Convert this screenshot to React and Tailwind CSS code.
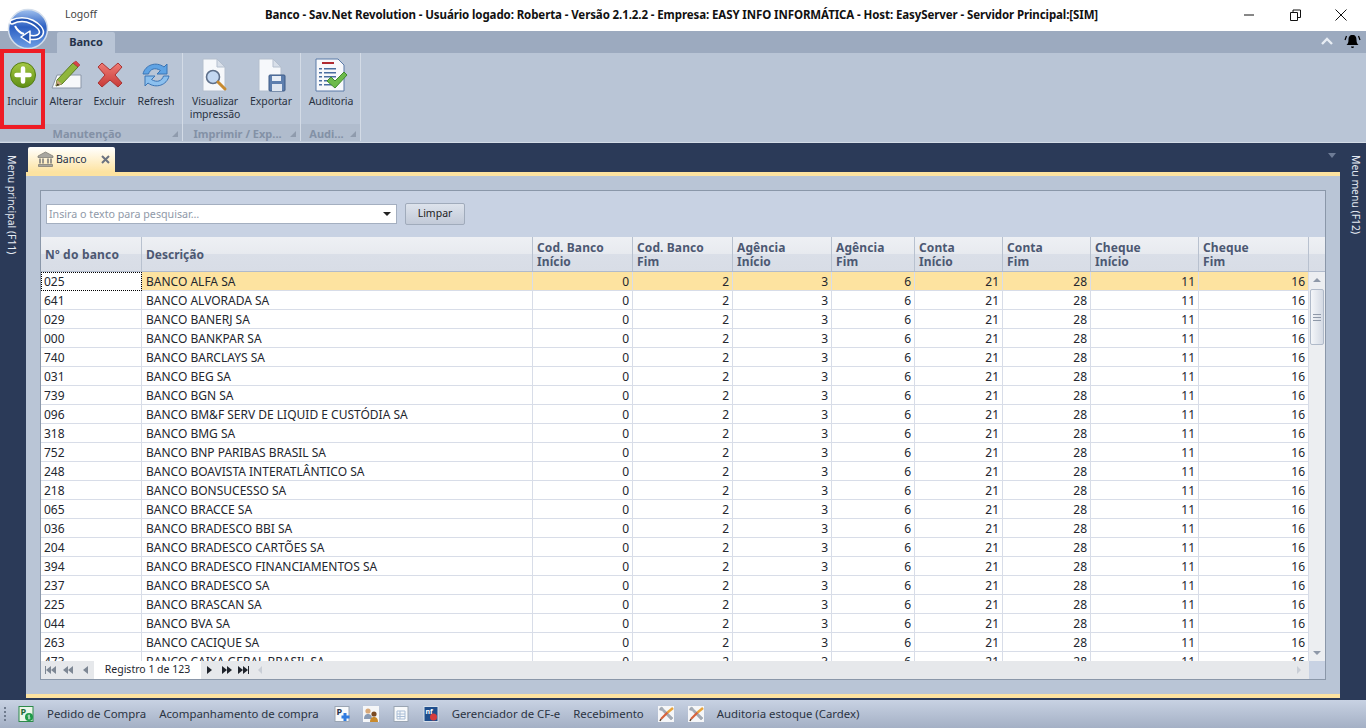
import React from 'react'

const banks = [
  ['025', 'BANCO ALFA SA'],
  ['641', 'BANCO ALVORADA SA'],
  ['029', 'BANCO BANERJ SA'],
  ['000', 'BANCO BANKPAR SA'],
  ['740', 'BANCO BARCLAYS SA'],
  ['031', 'BANCO BEG SA'],
  ['739', 'BANCO BGN SA'],
  ['096', 'BANCO BM&F SERV DE LIQUID E CUSTÓDIA SA'],
  ['318', 'BANCO BMG SA'],
  ['752', 'BANCO BNP PARIBAS BRASIL SA'],
  ['248', 'BANCO BOAVISTA INTERATLÂNTICO SA'],
  ['218', 'BANCO BONSUCESSO SA'],
  ['065', 'BANCO BRACCE SA'],
  ['036', 'BANCO BRADESCO BBI SA'],
  ['204', 'BANCO BRADESCO CARTÕES SA'],
  ['394', 'BANCO BRADESCO FINANCIAMENTOS SA'],
  ['237', 'BANCO BRADESCO SA'],
  ['225', 'BANCO BRASCAN SA'],
  ['044', 'BANCO BVA SA'],
  ['263', 'BANCO CACIQUE SA'],
  ['473', 'BANCO CAIXA GERAL BRASIL SA'],
]

const values = [0, 2, 3, 6, 21, 28, 11, 16]

const headers = [
  ['Cod. Banco', 'Início'],
  ['Cod. Banco', 'Fim'],
  ['Agência', 'Início'],
  ['Agência', 'Fim'],
  ['Conta', 'Início'],
  ['Conta', 'Fim'],
  ['Cheque', 'Início'],
  ['Cheque', 'Fim'],
]

const gridCols = 'grid grid-cols-[101px_391px_100px_100px_99px_83px_88px_88px_108px_110px]'
const headerBg = 'bg-[linear-gradient(#eef0f4_0%,#e7eaef_50%,#dadfe8_50%,#d8dde6_100%)]'

function Logo() {
  return (
    <svg width="42" height="42" viewBox="0 0 42 42">
      <defs>
        <linearGradient id="logoBg" x1="0" y1="0" x2="0" y2="1">
          <stop offset="0" stopColor="#9fc0ee" />
          <stop offset="0.45" stopColor="#2c5fc2" />
          <stop offset="1" stopColor="#6fa0e6" />
        </linearGradient>
      </defs>
      <circle cx="21" cy="21" r="19.5" fill="url(#logoBg)" stroke="#d3deec" strokeWidth="1.5" />
      <path d="M5 14c6-3 14-3 20 0 6 3 11 8 9 12-2 4-8 4-13 3" fill="none" stroke="#fff" strokeWidth="5.5" strokeLinecap="round" />
      <path d="M5 14c6-3 14-3 20 0 6 3 11 8 9 12-2 4-8 4-13 3" fill="none" stroke="#2556b4" strokeWidth="2.4" strokeLinecap="round" />
      <path d="M8 18c2 4 5 7 9 8" fill="none" stroke="#fff" strokeWidth="2" />
      <path d="M23 23l-9 6 9 6z" fill="#2556b4" stroke="#fff" strokeWidth="1.5" strokeLinejoin="round" />
    </svg>
  )
}

function PlusIcon() {
  return (
    <svg width="28" height="28" viewBox="0 0 28 28">
      <defs>
        <linearGradient id="plusBg" x1="0" y1="0" x2="0" y2="1">
          <stop offset="0" stopColor="#a5c844" />
          <stop offset="1" stopColor="#5f8f14" />
        </linearGradient>
      </defs>
      <circle cx="14" cy="14" r="12.5" fill="url(#plusBg)" stroke="#527c12" />
      <path d="M14 7.500v13M7.500 14h13" stroke="#fff" strokeWidth="4.5" strokeLinecap="round" />
    </svg>
  )
}

function EditIcon() {
  return (
    <svg width="32" height="30" viewBox="0 0 32 30">
      <path d="M7 15h24v13H2z" fill="#f7f8fa" stroke="#8b97a8" />
      <path d="M7 20L23 3l5 4-16 17-6 2z" fill="#8fb63c" stroke="#5b7c20" />
      <path d="M23 3l3-2 4 4-2 2z" fill="#d8424a" stroke="#a83434" strokeWidth="0.6" />
      <path d="M7 20l5 4-6 2z" fill="#c9a77f" />
      <path d="M6 26l1.500-2.500 2 1.500z" fill="#3a2c20" />
    </svg>
  )
}

function DeleteIcon() {
  return (
    <svg width="28" height="28" viewBox="0 0 28 28">
      <defs>
        <linearGradient id="delBg" x1="0" y1="0" x2="0" y2="1">
          <stop offset="0" stopColor="#ee7b74" />
          <stop offset="1" stopColor="#c83a38" />
        </linearGradient>
      </defs>
      <path d="M2 6l4-4 8 7 8-7 4 4-7 8 7 8-4 4-8-7-8 7-4-4 7-8z" fill="url(#delBg)" stroke="#a83434" strokeLinejoin="round" />
    </svg>
  )
}

function RefreshIcon() {
  return (
    <svg width="32" height="28" viewBox="0 0 32 28">
      <path d="M3 13C5 4 16 0 24 6l3-3v10H17l3.500-3.500C15 6 10 8 8.500 13z" fill="#5fa3e4" stroke="#3a74b4" strokeLinejoin="round" />
      <path d="M29 15c-2 9-13 13-21 7l-3 3V15h10l-3.500 3.500c5.500 3.500 10.500 1.500 12-3.500z" fill="#8cc0ee" stroke="#3a74b4" strokeLinejoin="round" />
    </svg>
  )
}

function PageShape() {
  return (
    <>
      <path d="M3 1h14l8 8v24H3z" fill="#f6f8fb" stroke="#b4bfce" />
      <path d="M17 1v8h8z" fill="#d8dfe9" stroke="#b4bfce" />
    </>
  )
}

function PreviewIcon() {
  return (
    <svg width="30" height="34" viewBox="0 0 30 34">
      <PageShape />
      <circle cx="13" cy="19" r="6.500" fill="#c3d8f2" stroke="#5d6f8a" strokeWidth="1.6" />
      <path d="M18 24l7 7" stroke="#c78a30" strokeWidth="3" strokeLinecap="round" />
    </svg>
  )
}

function ExportIcon() {
  return (
    <svg width="30" height="34" viewBox="0 0 30 34">
      <PageShape />
      <rect x="13" y="17" width="16" height="16" rx="1" fill="#5e7fae" stroke="#3d5a85" />
      <rect x="16" y="18" width="9" height="5" fill="#e8eef6" />
      <rect x="16" y="26" width="10" height="7" fill="#dfe6f0" />
    </svg>
  )
}

function AuditIcon() {
  return (
    <svg width="34" height="34" viewBox="0 0 34 34">
      <path d="M2 1h22l6 6v26H2z" fill="#f7f8fb" stroke="#5b7aa8" />
      <rect x="8" y="4" width="12" height="2" fill="#b02a30" />
      {[10, 14, 18, 22, 26].map((y) => (
        <g key={y}>
          <rect x="5" y={y} width="3" height="1.500" fill="#4a6da0" />
          <rect x="10" y={y} width="12" height="1.500" fill="#4a6da0" />
        </g>
      ))}
      <path d="M13 23l4-4 4 4 9-9 3 3-12 13z" fill="#6cba4a" stroke="#3f8a2c" />
    </svg>
  )
}

function BankIcon() {
  return (
    <svg width="17" height="17" viewBox="0 0 17 17">
      <path d="M8.500 1L16 5v1.500H1V5z" fill="#a8a6a0" stroke="#77756f" strokeWidth="0.7" />
      <path d="M3 7.500v5M6 7.500v5M11 7.500v5M14 7.500v5" stroke="#8e8c86" strokeWidth="1.800" />
      <path d="M1.500 13.500h14v2h-14z" fill="#a8a6a0" stroke="#77756f" strokeWidth="0.7" />
    </svg>
  )
}

function StatusPageIcon({ children, bg = '#f7f9fb', border = '#9aa5b3' }) {
  return (
    <svg width="16" height="16" viewBox="0 0 16 16">
      <rect x="1" y="0.500" width="14" height="15" fill={bg} stroke={border} />
      {children}
    </svg>
  )
}

function ToolsIcon() {
  return (
    <svg width="16" height="16" viewBox="0 0 16 16">
      <rect width="16" height="16" fill="#f5f6f8" />
      <path d="M2 2l2-1 1.500 2L15 12l-2 2L4 4.500 1.500 4z" fill="#a4acb6" stroke="#858d98" strokeWidth="0.4" />
      <path d="M15 2L9.500 6.500" stroke="#e8a33a" strokeWidth="2.400" />
      <path d="M9.500 6.500L3 13" stroke="#d7623a" strokeWidth="2.200" />
      <path d="M3 13l-1 2" stroke="#5a4632" strokeWidth="1.500" />
    </svg>
  )
}

function RibbonButton({ icon, label, width }) {
  return (
    <div className={`flex flex-col items-center shrink-0 ${width}`}>
      <div className="h-[36px] mt-[2px] flex items-center justify-center">{icon}</div>
      <div className="mt-[2px] text-center text-[10.5px] leading-[13px] tracking-[-0.1px] text-[#2a3342]">{label}</div>
    </div>
  )
}

function RibbonGroup({ label, width, children }) {
  return (
    <div className={`flex flex-col h-[88px] border-r border-[#d3dbe6] shrink-0 ${width}`}>
      <div className="flex flex-1 pl-px pt-[2px]">{children}</div>
      <div className="h-[17px] bg-[#b0bccd] flex items-center justify-between pl-[2px] pr-[4px] pt-[3px] text-[11px] font-bold text-[#8391a6]">
        <span className="flex-1 text-center truncate">{label}</span>
        <span className="w-0 h-0 border-l-[6px] border-l-transparent border-b-[6px] border-b-[#8f9bad]" />
      </div>
    </div>
  )
}

function NavArrows({ dir, bars, count, color }) {
  const items = []
  for (let i = 0; i < count; i++) items.push(i)
  const dark = color === 'dark'
  return (
    <span className="flex items-center w-[19px] justify-center">
      {bars && dir === 'l' && <span className={`w-px h-[8px] ${dark ? 'bg-[#20242c]' : 'bg-[#7d8794]'}`} />}
      {items.map((i) => (
        <span
          key={i}
          className={
            dir === 'l'
              ? `w-0 h-0 border-y-[4px] border-y-transparent border-r-[5px] ${dark ? 'border-r-[#20242c]' : 'border-r-[#7d8794]'}`
              : `w-0 h-0 border-y-[4px] border-y-transparent border-l-[5px] ${dark ? 'border-l-[#20242c]' : 'border-l-[#7d8794]'}`
          }
        />
      ))}
      {bars && dir === 'r' && <span className={`w-px h-[8px] ${dark ? 'bg-[#20242c]' : 'bg-[#7d8794]'}`} />}
    </span>
  )
}

export default function App() {
  return (
    <div className="relative w-[1366px] h-[728px] overflow-hidden flex flex-col bg-[#2b3a58] font-['Noto_Sans','Liberation_Sans',sans-serif] text-[12px]">
      {/* barra de titulo */}
      <div className="h-[31px] bg-white flex items-center shrink-0">
        <span className="ml-[65px] w-[200px] shrink-0 -mt-[2px] text-[10.5px] text-[#444]">Logoff</span>
        <span className="flex-1 -mt-[1px] text-[11.5px] tracking-[-0.1px] font-bold text-[#111] whitespace-nowrap">
          Banco - Sav.Net Revolution - Usuário logado: Roberta - Versão 2.1.2.2 - Empresa: EASY INFO INFORMÁTICA - Host: EasyServer - Servidor Principal:[SIM]
        </span>
        <div className="flex items-center gap-[30px] pr-[17px] -mt-[2px]">
          <svg width="16" height="12" viewBox="0 0 16 12"><path d="M3 6h10" stroke="#111" strokeWidth="1" /></svg>
          <svg width="16" height="12" viewBox="0 0 16 12"><path d="M3.500 3.500h7v8h-7zM6 3.500V1h7.500v7.500h-3" fill="none" stroke="#111" /></svg>
          <svg width="16" height="12" viewBox="0 0 16 12"><path d="M2.500 0.500l11 11M13.500 0.500l-11 11" stroke="#111" /></svg>
        </div>
      </div>

      {/* abas do ribbon */}
      <div className="h-[22px] bg-[#9caabf] flex items-end shrink-0 pl-[57px] pr-[5px]">
        <div className="w-[58px] h-[21px] rounded-t-[2px] bg-[#b9c5d6] flex items-center justify-center text-[11px] font-bold text-[#25324a]">
          Banco
        </div>
        <div className="ml-auto self-center flex items-center gap-[11px] -mt-[2px]">
          <svg width="12" height="8" viewBox="0 0 12 8"><path d="M1 7l5-5 5 5" fill="none" stroke="#e8edf4" strokeWidth="2.400" /></svg>
          <svg width="17" height="17" viewBox="0 0 17 17">
            <path d="M8.500 2c3 0 4 2 4 5 0 3 1 4 2 5H2.500c1-1 2-2 2-5 0-3 1-5 4-5zM7 13.500h3a1.500 1.500 0 01-3 0z" fill="#000" />
            <path d="M2.500 3L1 7M14.500 3l1.500 4" stroke="#000" strokeWidth="1.200" />
          </svg>
        </div>
      </div>

      {/* ribbon */}
      <div className="h-[90px] bg-[#b9c5d6] border-b border-[#d3dbe6] flex shrink-0">
        <RibbonGroup label="Manutenção" width="w-[183px]">
          <RibbonButton icon={<PlusIcon />} label="Incluir" width="w-[43px]" />
          <RibbonButton icon={<EditIcon />} label="Alterar" width="w-[44px]" />
          <RibbonButton icon={<DeleteIcon />} label="Excluir" width="w-[43px]" />
          <RibbonButton icon={<RefreshIcon />} label="Refresh" width="w-[50px]" />
        </RibbonGroup>
        <RibbonGroup label="Imprimir / Exp..." width="w-[118px]">
          <RibbonButton icon={<PreviewIcon />} label={<>Visualizar<br />impressão</>} width="w-[62px]" />
          <RibbonButton icon={<ExportIcon />} label="Exportar" width="w-[50px]" />
        </RibbonGroup>
        <RibbonGroup label="Audi..." width="w-[60px]">
          <RibbonButton icon={<AuditIcon />} label="Auditoria" width="w-[58px]" />
        </RibbonGroup>
      </div>

      {/* area principal */}
      <div className="flex-1 flex min-h-0">
        <div className="w-[26px] shrink-0 flex justify-center pt-[12px] pr-[3px]">
          <span className="[writing-mode:vertical-rl] text-[10.4px] text-[#e6ebf3]">Menu principal (F11)</span>
        </div>

        <div className="flex-1 flex flex-col min-w-0">
          <div className="h-[29px] flex items-end shrink-0 pl-[2px] relative">
            <div className="w-[87px] h-[25px] rounded-t-[2px] bg-gradient-to-b from-white to-[#fde3a0] flex items-center pl-[9px] text-[10.5px] text-[#25324a]">
              <BankIcon />
              <span className="ml-[2px]">Banco</span>
              <svg className="ml-[14px]" width="9" height="9" viewBox="0 0 9 9"><path d="M1 1l7 7M8 1L1 8" stroke="#6b7280" strokeWidth="2" /></svg>
            </div>
            <span className="absolute right-[4px] top-[10px] w-0 h-0 border-x-[4px] border-x-transparent border-t-[5px] border-t-[#6e7c96]" />
          </div>

          <div className="h-[526px] shrink-0 bg-[#b9c5d6] border-t-[4px] border-b-[4px] border-[#fde3a0] p-[14px]">
            <div className="h-[490px] border border-[#8a97a9] bg-[#c8d2e3] flex flex-col">
              {/* pesquisa */}
              <div className="h-[46px] shrink-0 flex items-center pl-[5px] pb-px">
                <div className="w-[351px] h-[20px] bg-white border border-[#a4afc0] flex items-center pl-[2px] pr-[5px]">
                  <span className="flex-1 pt-[2px] text-[10.7px] text-[#8f99a8]">Insira o texto para pesquisar…</span>
                  <span className="w-0 h-0 border-x-[4px] border-x-transparent border-t-[4px] border-t-[#222]" />
                </div>
                <div className="ml-[8px] w-[60px] h-[22px] rounded-[2px] border border-[#a0abbb] bg-gradient-to-b from-[#dde3ec] to-[#c2cad8] flex items-center justify-center pt-px text-[10.5px] text-[#222]">
                  Limpar
                </div>
              </div>

              {/* cabecalho */}
              <div className="h-[35px] shrink-0 flex border-b border-[#b0bacb]">
                <div className={`${gridCols} w-[1268px] shrink-0`}>
                  <div className={`${headerBg} border-r border-[#b8c1cf] flex items-center px-[4px] pt-px font-bold text-[12px] tracking-[0.2px] text-[#4c5872]`}>Nº do banco</div>
                  <div className={`${headerBg} border-r border-[#b8c1cf] flex items-center px-[4px] pt-px font-bold text-[12px] text-[#4c5872]`}>Descrição</div>
                  {headers.map((h, i) => (
                    <div key={i} className={`${headerBg} border-r border-[#b8c1cf] flex flex-col justify-center pl-[4px] pr-[2px] pt-px font-bold text-[12px] tracking-[0.1px] leading-[14px] text-[#4c5872]`}>
                      <span>{h[0]}</span>
                      <span>{h[1]}</span>
                    </div>
                  ))}
                </div>
                <div className={`flex-1 ${headerBg}`} />
              </div>

              {/* linhas */}
              <div className="h-[389px] shrink-0 flex overflow-hidden">
                <div className="w-[1268px] shrink-0 overflow-hidden">
                  {banks.map((b, i) => (
                    <div key={b[0]} className={`${gridCols} h-[19px] border-b border-[#d8dde8] text-[12px] text-[#23262e] ${i === 0 ? 'bg-[#fde3a0]' : 'bg-white'}`}>
                      <div className={`px-[3px] pt-px flex items-center border-r border-[#d8dde8] ${i === 0 ? 'bg-white outline-1 -outline-offset-1 outline-dotted outline-black' : ''}`}>{b[0]}</div>
                      <div className="px-[4px] pt-px flex items-center border-r border-[#d8dde8]">{b[1]}</div>
                      {values.map((v, j) => (
                        <div key={j} className="px-[3px] pt-px flex items-center justify-end border-r border-[#d8dde8]">{v}</div>
                      ))}
                    </div>
                  ))}
                </div>
                <div className="flex-1 bg-[#eceef1] flex flex-col items-center pt-[6px]">
                  <span className="w-0 h-0 border-x-[4px] border-x-transparent border-b-[4px] border-b-[#8e98a8]" />
                  <div className="mt-[7px] w-[14px] h-[56px] rounded-[2px] border border-[#b0bac9] bg-gradient-to-r from-[#f4f6f9] to-[#d4dae4] flex flex-col items-center justify-center gap-[2px]">
                    <span className="w-[8px] h-px bg-[#8e98a8]" />
                    <span className="w-[8px] h-px bg-[#8e98a8]" />
                    <span className="w-[8px] h-px bg-[#8e98a8]" />
                  </div>
                  <span className="mt-auto mb-[6px] w-0 h-0 border-x-[4px] border-x-transparent border-t-[4px] border-t-[#8e98a8]" />
                </div>
              </div>

              {/* navegador de registros */}
              <div className="h-[18px] shrink-0 flex items-center">
                <div className="w-[1268px] shrink-0 h-full flex items-center bg-[#e6e8eb]">
                  <div className="w-[53px] pl-[1px] flex items-center">
                    <NavArrows dir="l" bars count={2} />
                    <NavArrows dir="l" count={2} />
                    <NavArrows dir="l" count={1} />
                  </div>
                  <div className="w-[107px] h-full bg-white flex items-center justify-center text-[10.5px] text-[#23262e]">Registro 1 de 123</div>
                  <div className="w-[51px] flex items-center">
                    <NavArrows dir="r" count={1} color="dark" />
                    <NavArrows dir="r" count={2} color="dark" />
                    <NavArrows dir="r" bars count={2} color="dark" />
                  </div>
                  <span className="ml-[6px] w-0 h-0 border-y-[4px] border-y-transparent border-r-[4px] border-r-[#c9ced6]" />
                  <span className="ml-auto mr-[8px] w-0 h-0 border-y-[4px] border-y-transparent border-l-[4px] border-l-[#c9ced6]" />
                </div>
              </div>
            </div>
          </div>
        </div>

        <div className="w-[26px] shrink-0 flex justify-center pt-[12px] pl-[5px]">
          <span className="[writing-mode:vertical-rl] text-[10.4px] text-[#e6ebf3]">Meu menu (F12)</span>
        </div>
      </div>

      {/* barra de atalhos */}
      <div className="h-[28px] shrink-0 bg-gradient-to-b from-[#c8d2e3] to-[#a4b0c5] flex items-center text-[#2a3342] text-[11.4px] whitespace-nowrap">
        <div className="ml-[4px] w-[2px] flex flex-col gap-[2px]">
          <span className="w-[2px] h-[2px] bg-[#6f7b8e]" />
          <span className="w-[2px] h-[2px] bg-[#6f7b8e]" />
          <span className="w-[2px] h-[2px] bg-[#6f7b8e]" />
          <span className="w-[2px] h-[2px] bg-[#6f7b8e]" />
        </div>
        <div className="ml-[12px] flex items-center">
          <StatusPageIcon bg="#eaf6e8" border="#2c8a4a">
            <text x="2.500" y="9" fontSize="9" fontWeight="700" fill="#1c6b38">P</text>
            <circle cx="11" cy="11" r="4" fill="#1f9a48" />
            <path d="M11 8.500v5M9.500 10h2.500M10 12h2.500" stroke="#fff" strokeWidth="0.7" />
          </StatusPageIcon>
        </div>
        <span className="ml-[13px]">Pedido de Compra</span>
        <span className="ml-[13px]">Acompanhamento de compra</span>
        <div className="ml-[15px]">
          <StatusPageIcon>
            <text x="2.500" y="9" fontSize="9" fontWeight="700" fill="#27344e">P</text>
            <path d="M11 7v8M7.500 11h8" stroke="#2f7be0" strokeWidth="3" />
          </StatusPageIcon>
        </div>
        <div className="ml-[13px]">
          <svg width="16" height="16" viewBox="0 0 16 16">
            <rect width="16" height="16" fill="#f5f6f8" />
            <circle cx="5" cy="5" r="2.600" fill="#d8a878" />
            <path d="M1 13c0-4 2-5 4-5s4 1 4 5z" fill="#8a9bb4" />
            <circle cx="11" cy="8" r="2.600" fill="#7a4a22" />
            <path d="M7 16c0-4 2-5 4-5s4 1 4 5z" fill="#c98a2c" />
          </svg>
        </div>
        <div className="ml-[14px]">
          <StatusPageIcon><path d="M4 5h8v8H4z" fill="none" stroke="#a9bdd6" /><path d="M4 8h8M4 10.500h8M7 5v8" stroke="#a9bdd6" /></StatusPageIcon>
        </div>
        <div className="ml-[14px]">
          <StatusPageIcon bg="#1f4e8c" border="#d6dfea">
            <text x="2.500" y="8" fontSize="7" fontWeight="700" fill="#fff">nf</text>
            <circle cx="10.500" cy="11" r="3.500" fill="#d63d3d" />
          </StatusPageIcon>
        </div>
        <span className="ml-[13px]">Gerenciador de CF-e</span>
        <span className="ml-[13px]">Recebimento</span>
        <div className="ml-[14px]"><ToolsIcon /></div>
        <div className="ml-[14px]"><ToolsIcon /></div>
        <span className="ml-[13px]">Auditoria estoque (Cardex)</span>
      </div>

      {/* sobreposicoes */}
      <div className="absolute left-[7px] top-[8px]"><Logo /></div>
      <div className="absolute left-0 top-[49px] w-[45px] h-[80px] border-[4px] border-[#ee1c25]" />
    </div>
  )
}
